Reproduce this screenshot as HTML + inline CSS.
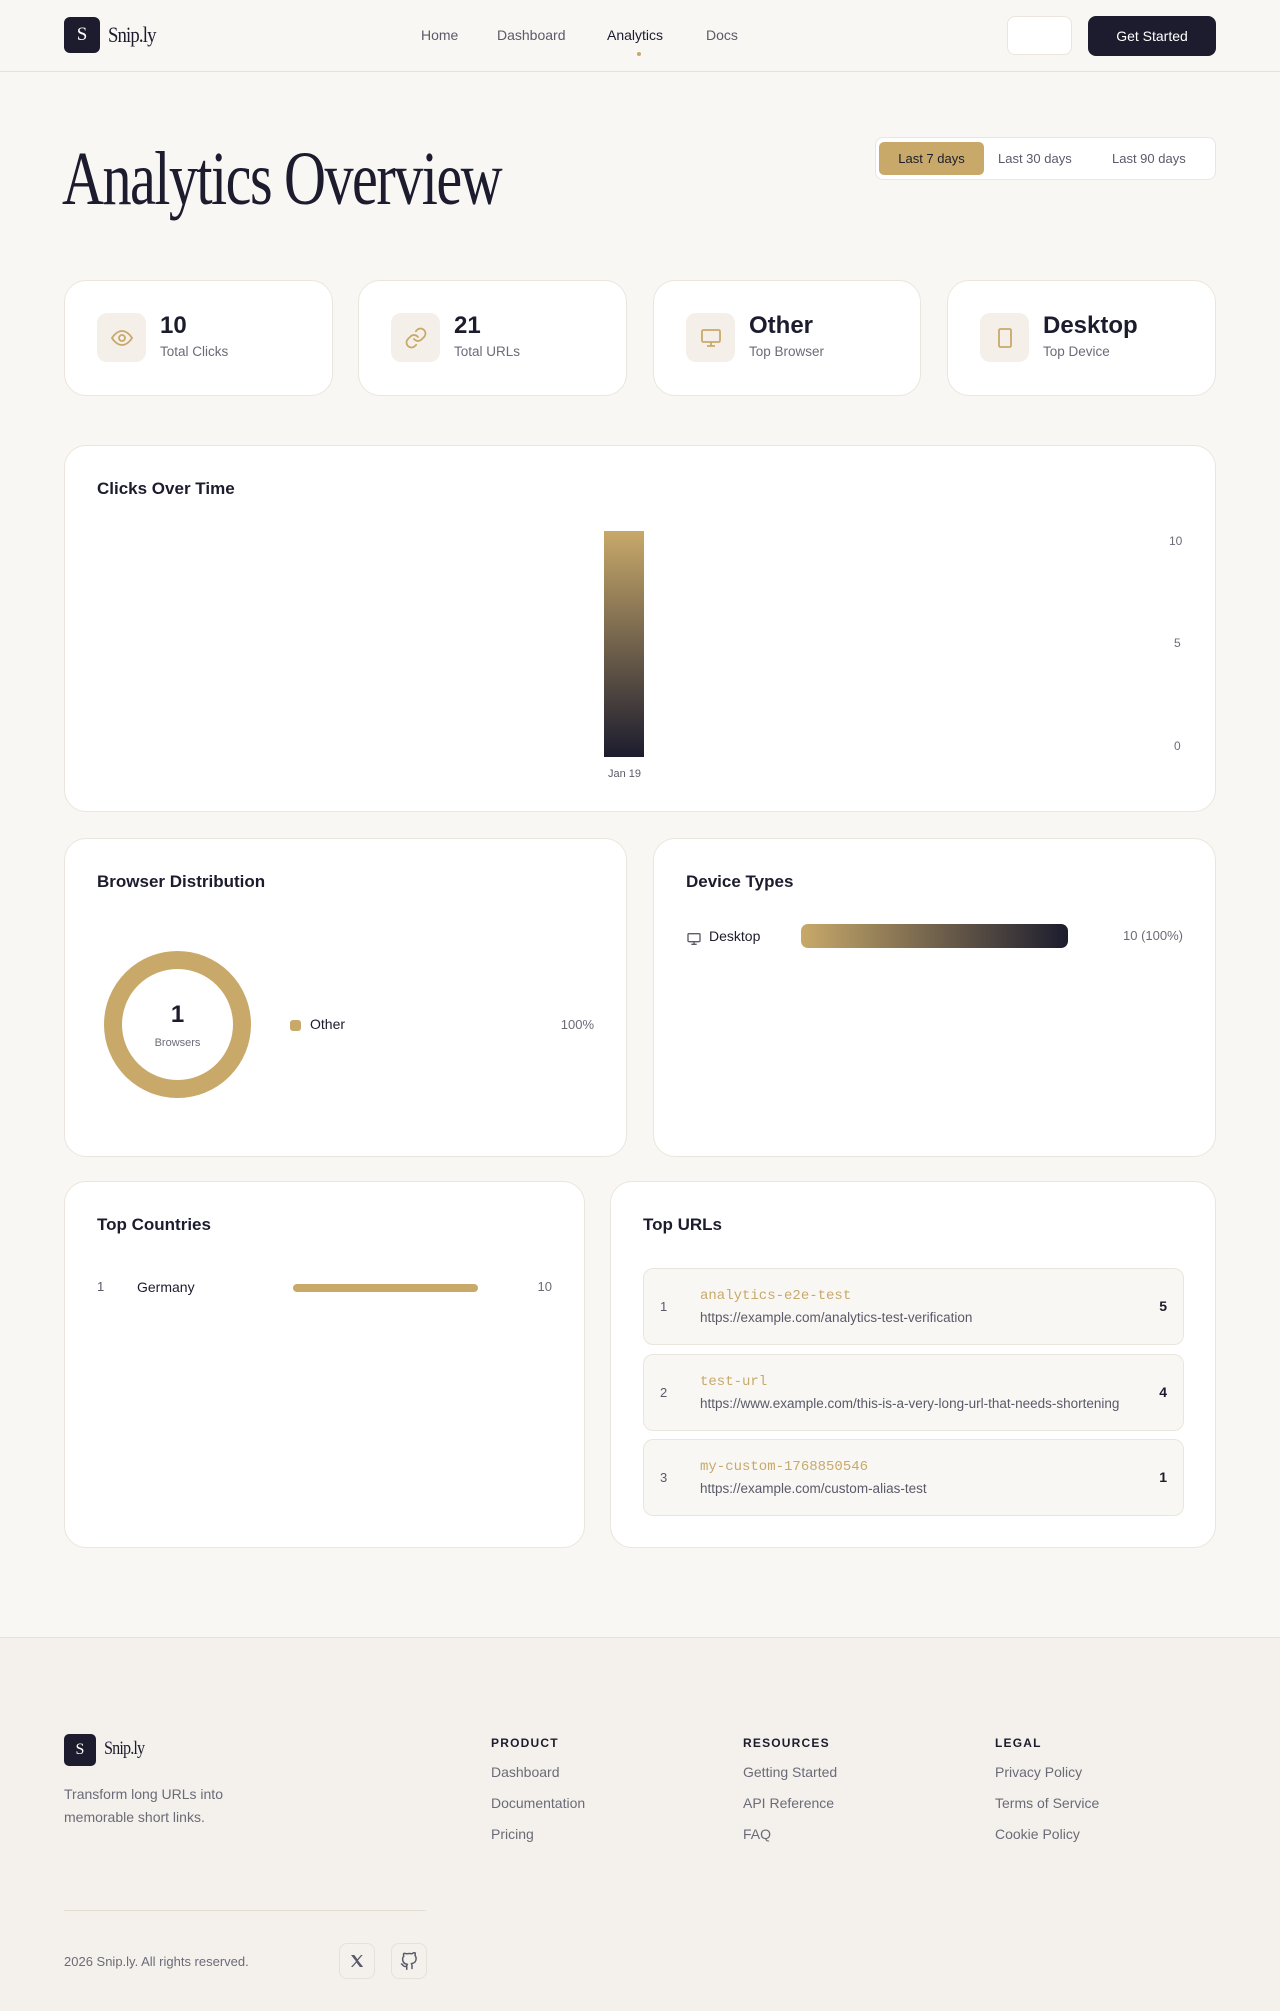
<!DOCTYPE html>
<html><head><meta charset="utf-8"><style>
*{box-sizing:border-box;margin:0;padding:0}
body{width:1280px;height:2011px;background:#f9f7f3;font-family:"Liberation Sans",sans-serif;color:#1c1c2e;position:relative;overflow:hidden}
.a{position:absolute}
.card{position:absolute;background:#fff;border:1px solid #ebe6dd;border-radius:22px}
.nav a{position:absolute;top:27px;font-size:14px;color:#5a5a6a;text-decoration:none}
.ib{position:absolute;left:32px;top:32px;width:49px;height:49px;background:#f4f0e9;border-radius:10px;display:flex;align-items:center;justify-content:center}
.sv{position:absolute;left:95px;top:31px;font-size:24px;font-weight:bold}
.sl{position:absolute;left:95px;top:63px;font-size:13.5px;color:#6b6b78}
.ct{position:absolute;left:32px;top:33px;font-size:17px;font-weight:bold;color:#1c1c2e}
.url{position:absolute;left:32px;width:541px;height:77px;background:#f9f7f3;border:1px solid #ebe6dd;border-radius:10px}
.url .n{position:absolute;left:16px;top:30px;font-size:13px;color:#5a5a6a}
.url .s{position:absolute;left:56px;top:19px;font-family:"Liberation Mono",monospace;font-size:14px;color:#c8a96a}
.url .u{position:absolute;left:56px;top:41px;font-size:13.5px;color:#5a5a6a;white-space:nowrap}
.url .c{position:absolute;right:16px;top:29px;font-size:14px;font-weight:bold}
.fh{position:absolute;top:1736px;font-size:12px;font-weight:bold;letter-spacing:1.2px;color:#1c1c2e}
.fl{position:absolute;font-size:14px;color:#6b6b78}
</style></head><body>
<div class="a" style="left:0;top:0;width:1280px;height:72px;border-bottom:1px solid #e6e1d8"></div>
<div class="a" style="left:64px;top:17px;width:36px;height:36px;background:#1c1c2e;border-radius:6px;color:#fff;font-family:'Liberation Serif',serif;font-size:19px;text-align:center;line-height:36px">S</div>
<div class="a" style="left:108px;top:22px;font-family:'Liberation Serif',serif;font-size:22px;letter-spacing:-1px;transform:scaleX(0.85);transform-origin:left top">Snip.ly</div>
<div class="nav"><a style="left:421px">Home</a><a style="left:497px">Dashboard</a><a style="left:607px;color:#1c1c2e">Analytics</a><a style="left:706px">Docs</a></div>
<div class="a" style="left:637px;top:52px;width:4px;height:4px;border-radius:2px;background:#c8a96a"></div>
<div class="a" style="left:1007px;top:16px;width:65px;height:39px;border:1px solid #ebe6dd;border-radius:8px;background:#fff"></div>
<div class="a" style="left:1088px;top:16px;width:128px;height:40px;background:#1c1c2e;border-radius:8px;color:#fff;font-size:14px;text-align:center;line-height:40px">Get Started</div>

<div class="a" style="left:62px;top:136px;font-family:'Liberation Serif',serif;font-size:76px;letter-spacing:-2px;transform:scaleX(0.765);transform-origin:left top;white-space:nowrap">Analytics Overview</div>
<div class="a" style="left:875px;top:137px;width:341px;height:43px;background:#fff;border:1px solid #ebe6dd;border-radius:8px"></div>
<div class="a" style="left:879px;top:142px;width:105px;height:33px;background:#c8a96a;border-radius:5px;font-size:13px;text-align:center;line-height:33px">Last 7 days</div>
<div class="a" style="left:998px;top:151px;font-size:13px;color:#5a5a6a">Last 30 days</div>
<div class="a" style="left:1112px;top:151px;font-size:13px;color:#5a5a6a">Last 90 days</div>

<div class="card" style="left:64px;top:280px;width:269px;height:116px"><div class="ib"><svg width="24" height="24" viewBox="0 0 24 24" fill="none" stroke="#c8a96a" stroke-width="1.8"><path d="M2 12s4-7 10-7 10 7 10 7-4 7-10 7S2 12 2 12z"/><circle cx="12" cy="12" r="3"/></svg></div><div class="sv">10</div><div class="sl">Total Clicks</div></div>
<div class="card" style="left:358px;top:280px;width:269px;height:116px"><div class="ib"><svg width="24" height="24" viewBox="0 0 24 24" fill="none" stroke="#c8a96a" stroke-width="1.8" stroke-linecap="round"><path d="M10 13a5 5 0 0 0 7.5.5l3-3a5 5 0 0 0-7-7l-1.7 1.7"/><path d="M14 11a5 5 0 0 0-7.5-.5l-3 3a5 5 0 0 0 7 7l1.7-1.7"/></svg></div><div class="sv">21</div><div class="sl">Total URLs</div></div>
<div class="card" style="left:653px;top:280px;width:268px;height:116px"><div class="ib"><svg width="24" height="24" viewBox="0 0 24 24" fill="none" stroke="#c8a96a" stroke-width="1.8"><rect x="3" y="4" width="18" height="12" rx="1.5"/><path d="M12 16v4M8 20h8"/></svg></div><div class="sv">Other</div><div class="sl">Top Browser</div></div>
<div class="card" style="left:947px;top:280px;width:269px;height:116px"><div class="ib"><svg width="24" height="24" viewBox="0 0 24 24" fill="none" stroke="#c8a96a" stroke-width="1.8"><rect x="6" y="3" width="12" height="18" rx="1.5"/></svg></div><div class="sv">Desktop</div><div class="sl">Top Device</div></div>

<div class="card" style="left:64px;top:445px;width:1152px;height:367px"><div class="ct">Clicks Over Time</div>
<div class="a" style="left:539px;top:85px;width:40px;height:226px;background:linear-gradient(#c8a96a,#1c1c2e)"></div>
<div class="a" style="left:543px;top:322px;font-size:11px;color:#5a5a6a">Jan 19</div>
<div class="a" style="left:1104px;top:88px;font-size:12px;color:#6b6b78">10</div>
<div class="a" style="left:1109px;top:190px;font-size:12px;color:#6b6b78">5</div>
<div class="a" style="left:1109px;top:293px;font-size:12px;color:#6b6b78">0</div></div>

<div class="card" style="left:64px;top:838px;width:563px;height:319px"><div class="ct">Browser Distribution</div>
<div class="a" style="left:39px;top:112px;width:147px;height:147px;border-radius:50%;border:18px solid #c8a96a"></div>
<div class="a" style="left:39px;top:162px;width:147px;text-align:center;font-size:24px;font-weight:bold">1</div>
<div class="a" style="left:39px;top:198px;width:147px;text-align:center;font-size:11px;color:#6b6b78">Browsers</div>
<div class="a" style="left:225px;top:181px;width:11px;height:11px;border-radius:3px;background:#c8a96a"></div>
<div class="a" style="left:245px;top:177px;font-size:14px">Other</div>
<div class="a" style="right:32px;top:178px;font-size:13px;color:#6b6b78">100%</div></div>

<div class="card" style="left:653px;top:838px;width:563px;height:319px"><div class="ct">Device Types</div>
<svg class="a" style="left:32px;top:92px" width="16" height="16" viewBox="0 0 24 24" fill="none" stroke="#5a5a6a" stroke-width="2"><rect x="3" y="4" width="18" height="12" rx="1.5"/><path d="M12 16v4M8 20h8"/></svg>
<div class="a" style="left:55px;top:89px;font-size:14px">Desktop</div>
<div class="a" style="left:147px;top:85px;width:267px;height:24px;border-radius:7px;background:linear-gradient(90deg,#c8a96a,#1c1c2e)"></div>
<div class="a" style="right:32px;top:89px;font-size:13px;color:#6b6b78">10 (100%)</div></div>

<div class="card" style="left:64px;top:1181px;width:521px;height:367px"><div class="ct">Top Countries</div>
<div class="a" style="left:32px;top:97px;font-size:13px;color:#5a5a6a">1</div>
<div class="a" style="left:72px;top:97px;font-size:14px">Germany</div>
<div class="a" style="left:228px;top:102px;width:185px;height:8px;border-radius:4px;background:#c8a96a"></div>
<div class="a" style="right:32px;top:97px;font-size:13px;color:#6b6b78">10</div></div>

<div class="card" style="left:610px;top:1181px;width:606px;height:367px"><div class="ct">Top URLs</div>
<div class="url" style="top:86px"><div class="n">1</div><div class="s">analytics-e2e-test</div><div class="u">https://example.com/analytics-test-verification</div><div class="c">5</div></div>
<div class="url" style="top:172px"><div class="n">2</div><div class="s">test-url</div><div class="u">https://www.example.com/this-is-a-very-long-url-that-needs-shortening</div><div class="c">4</div></div>
<div class="url" style="top:257px"><div class="n">3</div><div class="s">my-custom-1768850546</div><div class="u">https://example.com/custom-alias-test</div><div class="c">1</div></div></div>

<div class="a" style="left:0;top:1637px;width:1280px;height:374px;background:#f4f1ec;border-top:1px solid #e6e1d8"></div>
<div class="a" style="left:64px;top:1734px;width:32px;height:32px;background:#1c1c2e;border-radius:5px;color:#fff;font-family:'Liberation Serif',serif;font-size:16px;text-align:center;line-height:32px">S</div>
<div class="a" style="left:104px;top:1738px;font-family:'Liberation Serif',serif;font-size:19px;letter-spacing:-1px;transform:scaleX(0.85);transform-origin:left top">Snip.ly</div>
<div class="a" style="left:64px;top:1783px;font-size:14px;line-height:23px;color:#6b6b78">Transform long URLs into<br>memorable short links.</div>
<div class="fh" style="left:491px">PRODUCT</div><div class="fh" style="left:743px">RESOURCES</div><div class="fh" style="left:995px">LEGAL</div>
<div class="fl" style="left:491px;top:1764px">Dashboard</div><div class="fl" style="left:491px;top:1795px">Documentation</div><div class="fl" style="left:491px;top:1826px">Pricing</div>
<div class="fl" style="left:743px;top:1764px">Getting Started</div><div class="fl" style="left:743px;top:1795px">API Reference</div><div class="fl" style="left:743px;top:1826px">FAQ</div>
<div class="fl" style="left:995px;top:1764px">Privacy Policy</div><div class="fl" style="left:995px;top:1795px">Terms of Service</div><div class="fl" style="left:995px;top:1826px">Cookie Policy</div>
<div class="a" style="left:64px;top:1910px;width:362px;height:1px;background:#e3ddd2"></div>
<div class="a" style="left:64px;top:1954px;font-size:13px;color:#6b6b78">2026 Snip.ly. All rights reserved.</div>
<div class="a" style="left:339px;top:1943px;width:36px;height:36px;border:1px solid #e6e1d8;border-radius:8px;display:flex;align-items:center;justify-content:center"><svg width="16" height="16" viewBox="0 0 24 24" fill="#5a5a6a"><path d="M3 3h5l4.5 6.2L18 3h2.5l-7 8 7.8 10h-5l-5-6.6L5.5 21H3l7.5-8.5z"/></svg></div>
<div class="a" style="left:391px;top:1943px;width:36px;height:36px;border:1px solid #e6e1d8;border-radius:8px;display:flex;align-items:center;justify-content:center"><svg width="18" height="18" viewBox="0 0 24 24" fill="none" stroke="#5a5a6a" stroke-width="2" stroke-linecap="round" stroke-linejoin="round"><path d="M9 19c-5 1.5-5-2.5-7-3m14 6v-3.9a3.4 3.4 0 0 0-.9-2.6c3.1-.4 6.4-1.5 6.4-7a5.4 5.4 0 0 0-1.5-3.8 5 5 0 0 0-.1-3.8s-1.2-.4-3.9 1.5a13.4 13.4 0 0 0-7 0C6.3 1.5 5.1 1.9 5.1 1.9a5 5 0 0 0-.1 3.8A5.4 5.4 0 0 0 3.5 9.5c0 5.4 3.3 6.6 6.4 7a3.4 3.4 0 0 0-.9 2.6V23"/></svg></div>
</body></html>
